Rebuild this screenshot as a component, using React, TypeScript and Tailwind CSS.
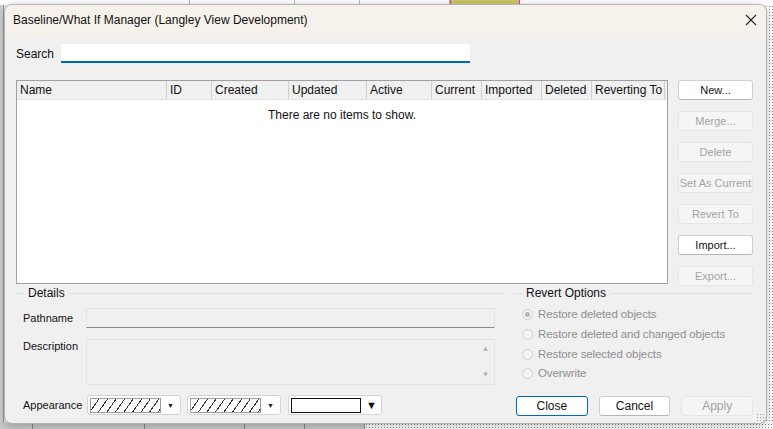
import React from 'react';

const ui = "font-['Liberation_Sans',Arial,sans-serif]";
const ms = "font-['Liberation_Sans',Arial,sans-serif]";

const columns = [
  { label: 'Name', w: 150 },
  { label: 'ID', w: 45 },
  { label: 'Created', w: 77 },
  { label: 'Updated', w: 78 },
  { label: 'Active', w: 65 },
  { label: 'Current', w: 50 },
  { label: 'Imported', w: 60 },
  { label: 'Deleted', w: 50 },
  { label: 'Reverting To', w: 73 },
];

const sideButtons = [
  { label: 'New...', enabled: true },
  { label: 'Merge...', enabled: false },
  { label: 'Delete', enabled: false },
  { label: 'Set As Current', enabled: false },
  { label: 'Revert To', enabled: false },
  { label: 'Import...', enabled: true },
  { label: 'Export...', enabled: false },
];

const revertOptions = [
  'Restore deleted objects',
  'Restore deleted and changed objects',
  'Restore selected objects',
  'Overwrite',
];

const SideButton = ({ label, enabled }: { label: string; enabled: boolean }) => (
  <div
    className={
      enabled
        ? `h-[20px] flex items-center justify-center rounded-[3px] border border-[#cfcfcf] border-b-[#b5b5b5] bg-white text-[11px] text-[#111] ${ms}`
        : `h-[20px] flex items-center justify-center rounded-[3px] border border-[#e6e6e6] bg-[#f5f5f5] text-[11px] text-[#a3a3a3] ${ms}`
    }
  >
    {label}
  </div>
);

const GroupHeader = ({ label, lead }: { label: string; lead: number }) => (
  <div className="flex items-center h-[14px]">
    <div className="h-px bg-[#d7e0e6]" style={{ width: lead }} />
    <span className="px-[4px] text-[12px] leading-none text-[#111]">{label}</span>
    <div className="h-px flex-1 bg-[#d7e0e6]" />
  </div>
);

const Hatch = () => (
  <div className="flex items-center h-[20px] w-[94px] rounded-[3px] border border-[#d4d4d4] bg-white pl-[2px] pr-[6px] gap-[6px]">
    <div className="h-[15px] flex-1 border border-[#9a9a9a] bg-[repeating-linear-gradient(125deg,#fff_0px,#fff_6px,#333_6px,#333_7px)]" />
    <span className="text-[7px] leading-none text-[#222]">▼</span>
  </div>
);

const App: React.FC = () => {
  return (
    <div className={`relative w-[773px] h-[429px] overflow-hidden bg-[#d9d9d9] ${ui}`}>
      {/* spreadsheet behind the dialog */}
      <div className="absolute inset-0 flex flex-col">
        <div className="h-[5px] flex bg-white">
          <div className="w-[190px] border-r border-[#b8b8b8]" />
          <div className="w-[105px] border-r border-[#b8b8b8]" />
          <div className="w-[65px] border-r border-[#b8b8b8]" />
          <div className="w-[90px] border-r border-[#b8b8b8]" />
          <div className="w-[70px] bg-[#c9c66a] border-x border-[#ff2fa0]" />
          <div className="flex-1" />
        </div>
        <div className="flex-1 flex">
          <div className="w-[4px] bg-[#cfcfcf] border-r border-[#9a9a9a]" />
          <div className="flex-1 bg-[#e8e8e8]" />
          <div className="w-[8px] bg-white bg-[radial-gradient(#8a8a8a_0.6px,transparent_0.8px)] bg-[length:3px_3px]" />
        </div>
        <div className="h-[6px] flex bg-[#c9c9c9]">
          <div className="w-[33px] border-r border-[#888]" />
          <div className="w-[112px] border-r border-[#888]" />
          <div className="w-[100px] border-r border-[#888]" />
          <div className="w-[60px] border-r border-[#888]" />
          <div className="w-[60px] border-r border-[#888]" />
          <div className="flex-1 bg-white bg-[radial-gradient(#8a8a8a_0.6px,transparent_0.8px)] bg-[length:3px_3px]" />
        </div>
      </div>

      {/* dialog window */}
      <div className="absolute left-[4px] top-[4px] w-[763px] h-[420px] rounded-[8px] border border-[#b4b4b4] bg-[#f0f0f0] shadow-[0_2px_8px_rgba(0,0,0,0.25)] overflow-hidden flex flex-col">
        <div className="h-[29px] shrink-0 bg-[#f7f1eb] flex items-center pl-[8px] pr-[9px]">
          <span className="text-[12px] text-[#111] flex-1">Baseline/What If Manager (Langley View Development)</span>
          <svg width="12" height="12" viewBox="0 0 12 12" className="text-[#222]">
            <path d="M1 1 L11 11 M11 1 L1 11" stroke="currentColor" strokeWidth="1.1" />
          </svg>
        </div>

        <div className="flex-1 flex flex-col pl-[11px] pr-[13px]">
          {/* search */}
          <div className="mt-[10px] h-[19px] flex items-center">
            <span className="w-[45px] text-[12px] text-[#111]">Search</span>
            <div className="w-[409px] h-[19px] bg-white border-b-2 border-[#0067c0]" />
          </div>

          {/* list + buttons */}
          <div className="mt-[17px] flex gap-[10px]">
            <div className="w-[652px] h-[204px] border border-[#a0a0a0] bg-white flex flex-col">
              <div className="h-[19px] flex bg-[#f0f0f0] border-b border-[#e3e3e3]">
                {columns.map((c) => (
                  <div
                    key={c.label}
                    className="flex items-center pl-[3px] whitespace-nowrap overflow-hidden border-r border-[#d0d0d0] text-[12px] text-[#111]"
                    style={{ width: c.w }}
                  >
                    {c.label}
                  </div>
                ))}
              </div>
              <div className="flex justify-center pt-[6px] text-[12px] text-[#111]">There are no items to show.</div>
            </div>
            <div className="w-[75px] flex flex-col gap-[11px]">
              {sideButtons.map((b) => (
                <SideButton key={b.label} label={b.label} enabled={b.enabled} />
              ))}
            </div>
          </div>

          {/* lower part */}
          <div className="flex gap-[8px]">
            <div className="w-[489px] flex flex-col">
              <GroupHeader label="Details" lead={8} />
              <div className={`pl-[7px] pr-[10px] flex flex-col text-[11px] text-[#111] ${ms}`}>
                <div className="mt-[8px] h-[20px] flex items-center">
                  <span className="w-[63px]">Pathname</span>
                  <div className="flex-1 h-[20px] bg-[#f0f0f0] border border-[#e3e3e3] border-b-[#8a8a8a]" />
                </div>
                <div className="mt-[11px] h-[46px] flex">
                  <span className="w-[63px] leading-[14px]">Description</span>
                  <div className="flex-1 h-[46px] bg-[#f0f0f0] border border-[#e3e3e3] flex justify-end">
                    <div className="w-[17px] flex flex-col items-center justify-between py-[5px] text-[8px] leading-none text-[#b8b8b8]">
                      <span>▲</span>
                      <span>▼</span>
                    </div>
                  </div>
                </div>
                <div className="mt-[10px] h-[20px] flex items-center">
                  <span className="w-[64px]">Appearance</span>
                  <Hatch />
                  <div className="w-[6px]" />
                  <Hatch />
                  <div className="w-[7px]" />
                  <div className="flex items-center h-[20px] w-[94px] rounded-[3px] border border-[#d4d4d4] bg-white pl-[2px] pr-[4px] gap-[5px]">
                    <div className="h-[15px] flex-1 border border-[#111] bg-white" />
                    <span className="text-[11px] leading-none text-[#111]">▼</span>
                  </div>
                </div>
              </div>
            </div>

            <div className="w-[240px] flex flex-col">
              <GroupHeader label="Revert Options" lead={9} />
              <div className="mt-[5px] pl-[9px] flex flex-col">
                {revertOptions.map((o, i) => (
                  <div key={o} className="h-[19.7px] flex items-center gap-[5px]">
                    <div className="w-[11px] h-[11px] rounded-full border border-[#d2d2d2] bg-[#f3f3f3] flex items-center justify-center">
                      {i === 0 && <div className="w-[5px] h-[5px] rounded-full bg-[#b5b5b5]" />}
                    </div>
                    <span className="text-[11.5px] tracking-[-0.1px] text-[#8f8f8f]">{o}</span>
                  </div>
                ))}
              </div>
              <div className="mt-[12px] pl-[3px] flex gap-[11px] text-[12px]">
                <div className="w-[72px] h-[20px] flex items-center justify-center rounded-[3px] border border-[#0067c0] bg-white text-[#111]">Close</div>
                <div className="w-[72px] h-[20px] flex items-center justify-center rounded-[3px] border border-[#cfcfcf] border-b-[#b5b5b5] bg-white text-[#111]">Cancel</div>
                <div className="w-[72px] h-[20px] flex items-center justify-center rounded-[3px] border border-[#e6e6e6] bg-[#f5f5f5] text-[#a3a3a3]">Apply</div>
              </div>
            </div>
          </div>
        </div>

        <div className="absolute right-[2px] bottom-[2px] w-[8px] h-[8px] bg-[radial-gradient(#a0a0a0_0.8px,transparent_1px)] bg-[length:3px_3px]" />
      </div>
    </div>
  );
};

export default App;
